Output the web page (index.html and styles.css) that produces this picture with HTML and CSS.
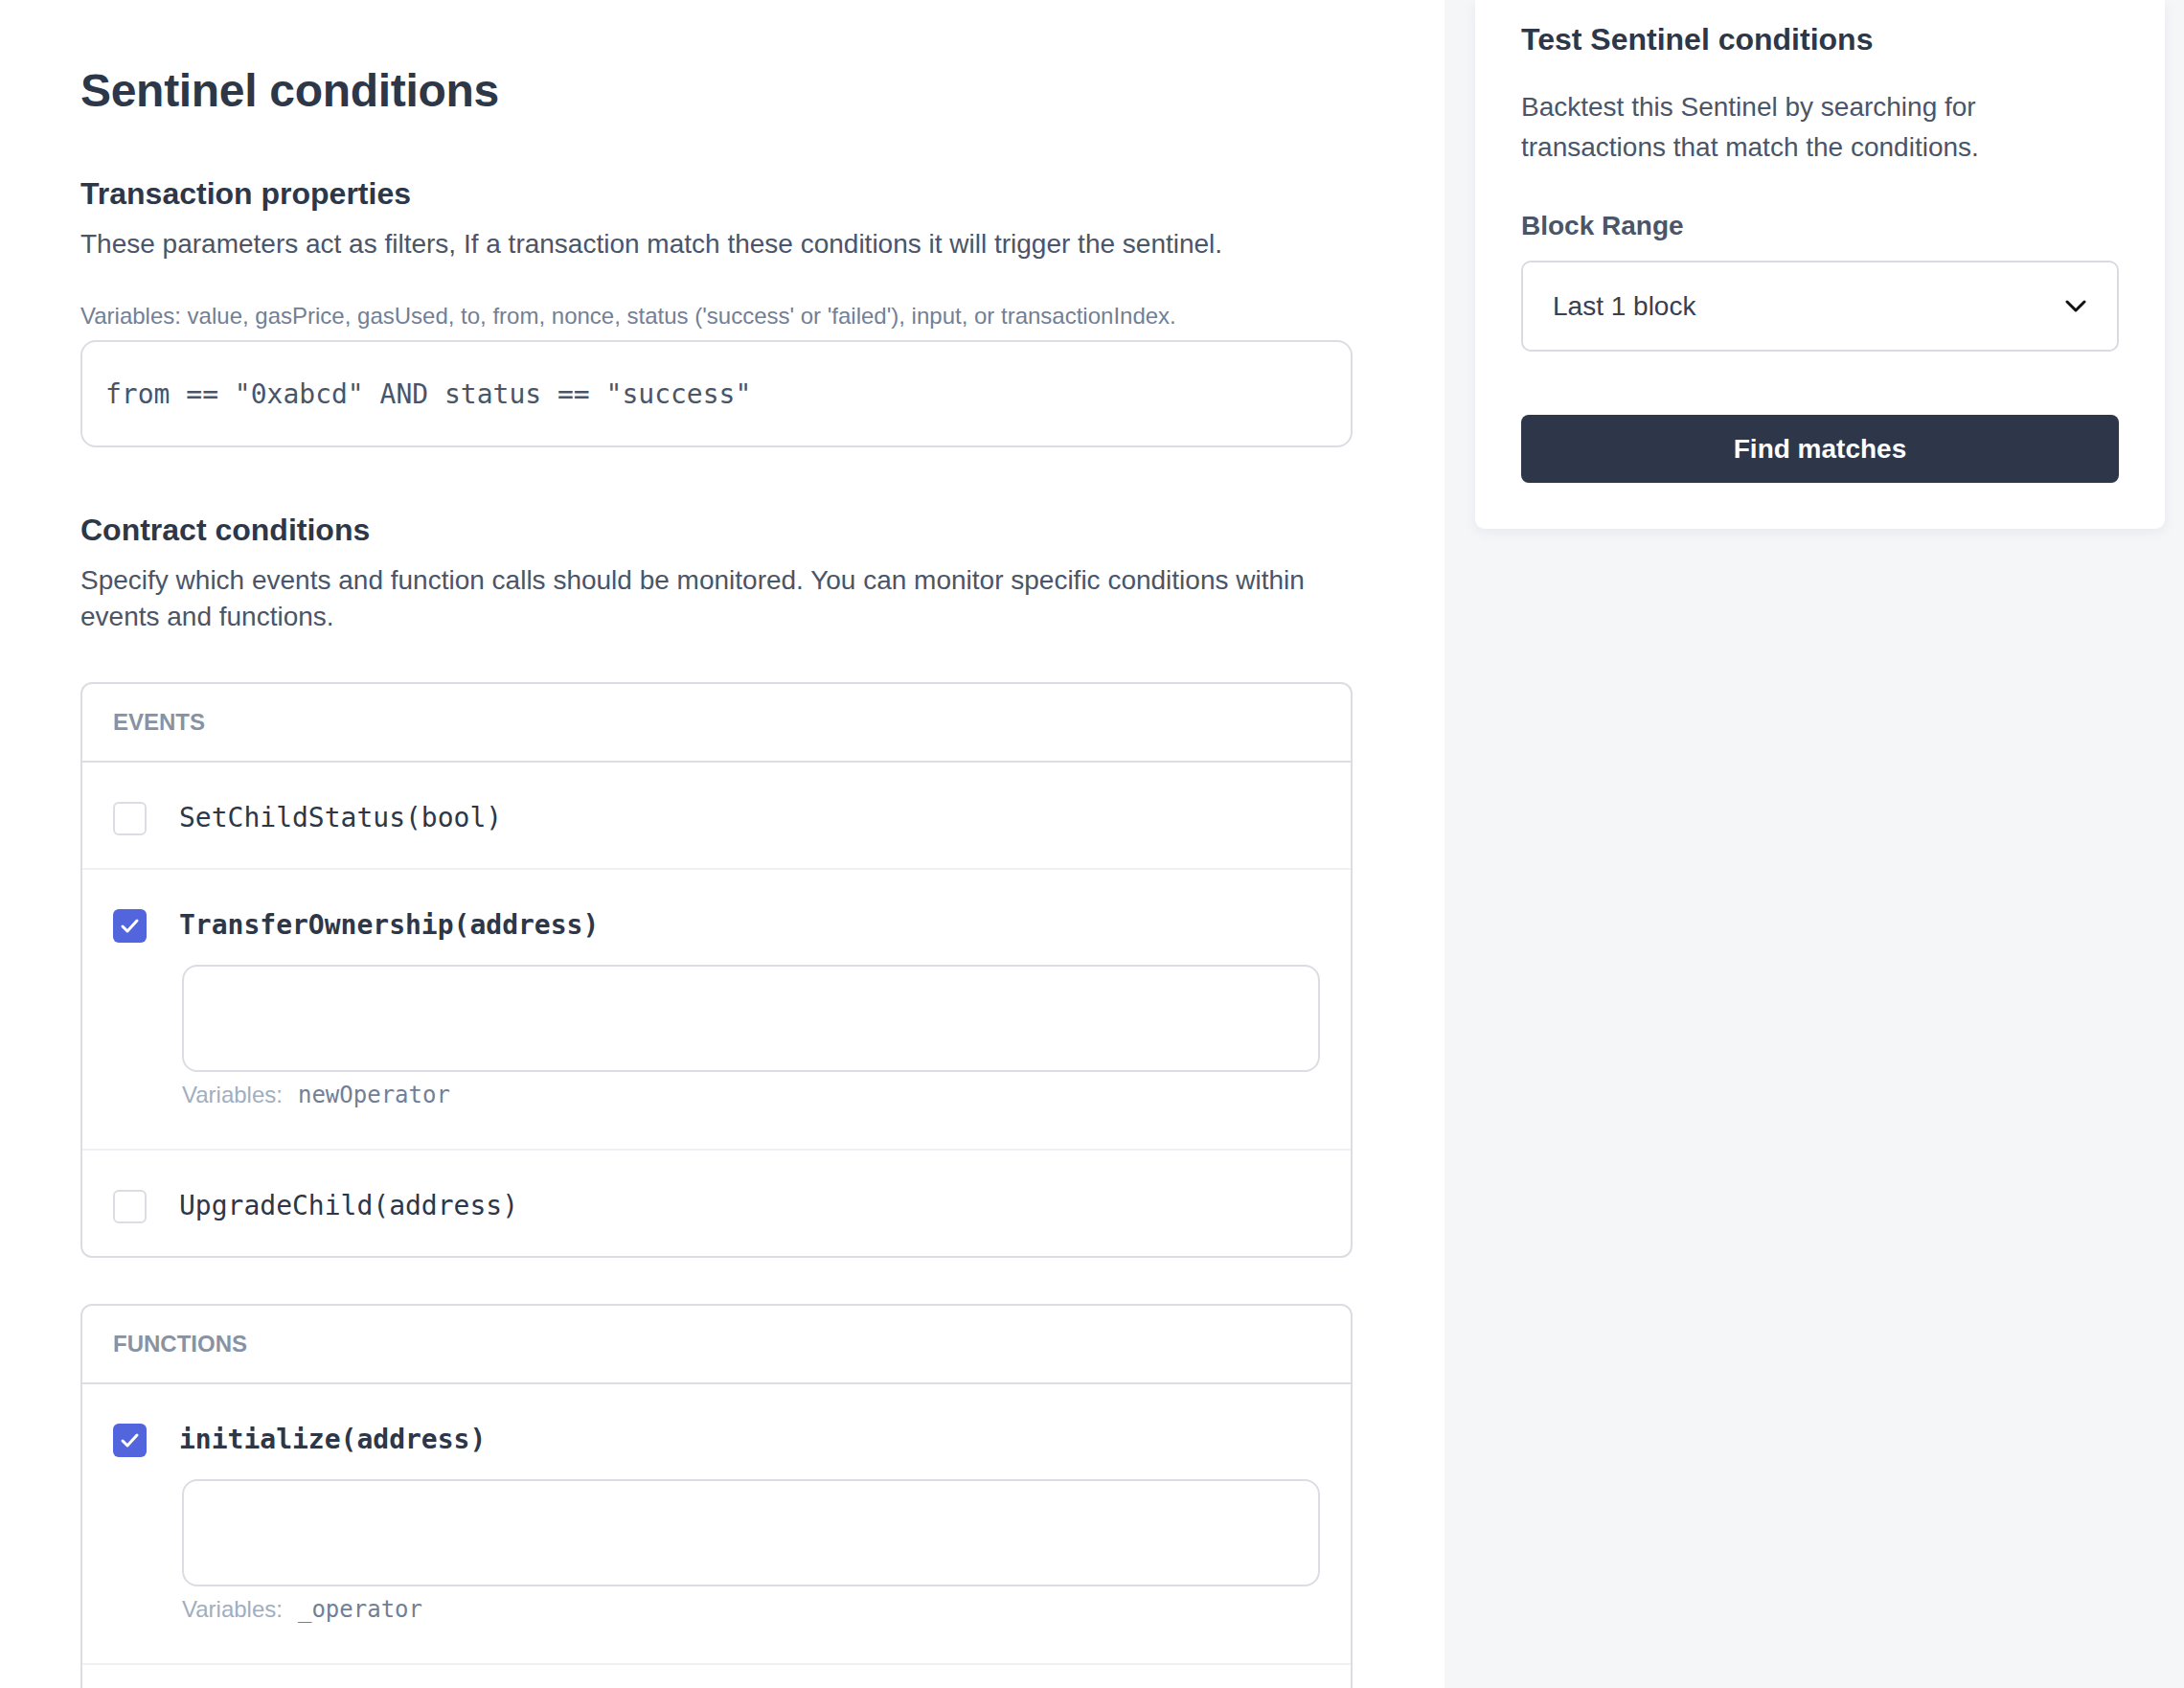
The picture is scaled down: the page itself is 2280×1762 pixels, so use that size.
FILE: index.html
```html
<!DOCTYPE html>
<html lang="en">
<head>
<meta charset="utf-8">
<title>Sentinel conditions</title>
<link rel="stylesheet" href="styles.css">
</head>
<body>
<div class="layout">
  <main class="main">
    <h1 class="title">Sentinel conditions</h1>

    <h2 class="section-title">Transaction properties</h2>
    <p class="section-desc">These parameters act as filters, If a transaction match these conditions it will trigger the sentinel.</p>
    <p class="hint">Variables: value, gasPrice, gasUsed, to, from, nonce, status ('success' or 'failed'), input, or transactionIndex.</p>
    <div class="code-input">from == "0xabcd" AND status == "success"</div>

    <h2 class="section-title section-title--gap">Contract conditions</h2>
    <p class="section-desc">Specify which events and function calls should be monitored. You can monitor specific conditions within events and functions.</p>

    <section class="group">
      <header class="group-head">EVENTS</header>
      <div class="item">
        <div class="item-line">
          <span class="check"></span>
          <span class="item-name">SetChildStatus(bool)</span>
        </div>
      </div>
      <div class="item">
        <div class="item-line">
          <span class="check check--on"><svg viewBox="0 0 35 35" width="35" height="35"><polyline points="10,18 15,23 25,12" fill="none" stroke="#fff" stroke-width="3" stroke-linecap="round" stroke-linejoin="round"/></svg></span>
          <span class="item-name item-name--on">TransferOwnership(address)</span>
        </div>
        <div class="item-body">
          <div class="cond-input"></div>
          <p class="vars"><span class="vars-label">Variables:</span><span class="vars-list">newOperator</span></p>
        </div>
      </div>
      <div class="item">
        <div class="item-line">
          <span class="check"></span>
          <span class="item-name">UpgradeChild(address)</span>
        </div>
      </div>
    </section>

    <section class="group group--gap">
      <header class="group-head">FUNCTIONS</header>
      <div class="item">
        <div class="item-line">
          <span class="check check--on"><svg viewBox="0 0 35 35" width="35" height="35"><polyline points="10,18 15,23 25,12" fill="none" stroke="#fff" stroke-width="3" stroke-linecap="round" stroke-linejoin="round"/></svg></span>
          <span class="item-name item-name--on">initialize(address)</span>
        </div>
        <div class="item-body">
          <div class="cond-input"></div>
          <p class="vars"><span class="vars-label">Variables:</span><span class="vars-list">_operator</span></p>
        </div>
      </div>
      <div class="item">
        <div class="item-line">
          <span class="check"></span>
          <span class="item-name">renounceOwnership()</span>
        </div>
      </div>
    </section>
  </main>

  <aside class="side">
    <section class="card">
      <h2 class="card-title">Test Sentinel conditions</h2>
      <p class="card-desc">Backtest this Sentinel by searching for transactions that match the conditions.</p>
      <label class="field-label">Block Range</label>
      <div class="select">
        <span class="select-value">Last 1 block</span>
        <svg class="chevron" viewBox="0 0 22 14" width="22" height="14"><polyline points="2,2 11,11 20,2" fill="none" stroke="#111" stroke-width="3" stroke-linecap="round" stroke-linejoin="round"/></svg>
      </div>
      <button class="btn">Find matches</button>
    </section>
  </aside>
</div>
</body>
</html>
```

FILE: styles.css
```css
* { box-sizing: border-box; }

html, body {
  margin: 0;
  padding: 0;
}

body {
  font-family: "Liberation Sans", Arial, sans-serif;
  color: #2d3748;
  background: #f5f6f8;
}

.layout {
  display: grid;
  grid-template-columns: 1508px 1fr;
  min-height: 100vh;
}

.main {
  background: #ffffff;
  padding: 66px 96px 0 84px;
}

.title {
  margin: 0;
  font-size: 48px;
  line-height: 58px;
  font-weight: 700;
  color: #2d3748;
  letter-spacing: -0.3px;
}

.section-title {
  margin: 58px 0 0;
  font-size: 32px;
  line-height: 40px;
  font-weight: 700;
  color: #2d3748;
}

.section-title--gap {
  margin-top: 66px;
}

.section-desc {
  margin: 14px 0 0;
  font-size: 28px;
  line-height: 38px;
  color: #4a5568;
}

.hint {
  margin: 40px 0 0;
  font-size: 24px;
  line-height: 32px;
  color: #718096;
}

.code-input {
  margin-top: 9px;
  height: 112px;
  border: 2px solid #dcdde3;
  border-radius: 16px;
  padding: 0 24px;
  display: flex;
  align-items: center;
  font-family: "DejaVu Sans Mono", "Liberation Mono", monospace;
  font-size: 28px;
  color: #4a5568;
  white-space: pre;
}

.group {
  margin-top: 49px;
  border: 2px solid #dcdde3;
  border-radius: 12px;
  background: #fff;
}

.group--gap {
  margin-top: 48px;
}

.group-head {
  height: 82px;
  padding: 0 32px;
  display: flex;
  align-items: center;
  border-bottom: 2px solid #dcdde3;
  font-size: 24px;
  font-weight: 700;
  color: #8792a2;
}

.item {
  padding: 40px 32px 34px;
  border-bottom: 2px solid #eef0f3;
}

.item:last-child {
  border-bottom: none;
}

.item-line {
  display: flex;
  align-items: center;
  height: 36px;
}

.check {
  width: 35px;
  height: 35px;
  flex: none;
  border: 2px solid #dcdde3;
  border-radius: 6px;
  background: #fff;
  display: flex;
  align-items: center;
  justify-content: center;
}

.check--on {
  border: none;
  background: #5265dc;
}

.item-name {
  margin-left: 34px;
  font-family: "DejaVu Sans Mono", "Liberation Mono", monospace;
  font-size: 28px;
  line-height: 36px;
  color: #2d3748;
}

.item-name--on {
  font-weight: 700;
}

.item-body {
  padding-left: 72px;
}

.cond-input {
  margin-top: 23px;
  height: 112px;
  border: 2px solid #dcdde3;
  border-radius: 16px;
  background: #fff;
}

.vars {
  margin: 8px 0 6px;
  font-size: 24px;
  line-height: 32px;
}

.vars-label {
  color: #a0aec0;
  margin-right: 16px;
}

.vars-list {
  font-family: "DejaVu Sans Mono", "Liberation Mono", monospace;
  color: #718096;
}

.side {
  padding: 0 20px 0 32px;
}

.card {
  background: #fff;
  border-radius: 0 0 10px 10px;
  box-shadow: 0 4px 14px rgba(30, 40, 60, 0.06);
  padding: 21px 48px 48px;
}

.card-title {
  margin: 0;
  font-size: 32px;
  line-height: 40px;
  font-weight: 700;
  color: #2d3748;
}

.card-desc {
  margin: 30px 0 0;
  font-size: 28px;
  line-height: 42px;
  color: #4a5568;
}

.field-label {
  display: block;
  margin-top: 42px;
  font-size: 28px;
  line-height: 38px;
  font-weight: 700;
  color: #4a5568;
}

.select {
  margin-top: 17px;
  height: 95px;
  border: 2px solid #d9dbe0;
  border-radius: 10px;
  padding: 0 32px 0 31px;
  display: flex;
  align-items: center;
  justify-content: space-between;
}

.select-value {
  font-size: 28px;
  color: #374151;
}

.chevron {
  display: block;
}

.btn {
  display: block;
  width: 100%;
  margin-top: 66px;
  height: 71px;
  border: none;
  border-radius: 8px;
  background: #2e3649;
  color: #fff;
  font-family: "Liberation Sans", Arial, sans-serif;
  font-size: 28px;
  font-weight: 700;
}
```
